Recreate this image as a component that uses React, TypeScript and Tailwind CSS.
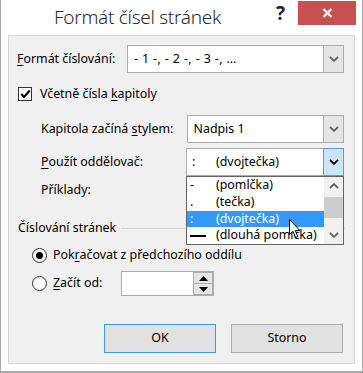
import type { ReactNode } from "react"

function Chevron({ up = false, color = "#555" }: { up?: boolean; color?: string }) {
    return (
        <svg width="10" height="6" viewBox="0 0 10 6">
            <path d={up ? "M1 5 L5 1.2 L9 5" : "M1 1 L5 4.8 L9 1"} fill="none" stroke={color} strokeWidth="1.8" />
        </svg>
    )
}

function Combo({ width, active = false, children }: { width: string; active?: boolean; children: ReactNode }) {
    return (
        <div className={`flex h-[28px] ${width}`}>
            <div className="flex-1 flex items-center bg-white border-y border-l border-[#acacac] text-black">{children}</div>
            {active ? (
                <div className="w-[21px] flex items-center justify-center bg-[#cce4f7] border border-[#569de5]">
                    <Chevron color="#000" />
                </div>
            ) : (
                <div className="w-[21px] flex items-center justify-center bg-[#e5e5e5] border border-[#acacac]">
                    <Chevron color="#606060" />
                </div>
            )}
        </div>
    )
}

function Key({ children }: { children: ReactNode }) {
    return <span className="underline underline-offset-2 decoration-1">{children}</span>
}

const items = [
    { g: "-", t: "(pomlčka)" },
    { g: ".", t: "(tečka)" },
    { g: ":", t: "(dvojtečka)" },
    { g: "—", t: "(dlouhá pomlčka)" },
]

export default function App() {
    return (
        <div className="w-[363px] h-[373px] bg-white border-l border-r border-b-2 border-[#a8a8a8] flex flex-col font-['Noto_Sans',sans-serif] text-[12.4px] text-black leading-none">
            {/* title bar */}
            <div className="h-[35px] flex items-start">
                <div className="pl-[53px] pt-[5px] text-[19px] leading-[24px] text-[#2b2b2b] font-light tracking-[-0.3px]">Formát čísel stránek</div>
                <div className="ml-auto flex items-start">
                    <div className="pr-[13px] text-[19px] leading-[26px] font-bold text-[#222]">?</div>
                    <div className="w-[58px] h-[24px] mt-[1px] mr-[6px] bg-[#c75050] flex items-center justify-center">
                        <svg width="11" height="10" viewBox="0 0 11 10">
                            <path d="M1.5 1 L9.5 9 M9.5 1 L1.5 9" stroke="#fff" strokeWidth="2.2" />
                        </svg>
                    </div>
                </div>
            </div>

            {/* panel */}
            <div className="mx-[7px] h-[329px] bg-[#f0f0f0] border border-[#d5d5d5] flex flex-col">
                <div className="mt-[9px] flex items-center pl-[8px] pr-[10px]">
                    <div className="w-[110px]">
                        <Key>F</Key>ormát číslování:
                    </div>
                    <Combo width="w-[217px]">
                        <span className="pl-[6px] tracking-[0.4px]">- 1 -, - 2 -, - 3 -, …</span>
                    </Combo>
                </div>

                <div className="mt-[13px] h-[16px] flex items-center pl-[9px]">
                    <div className="w-[14px] h-[14px] bg-white border border-[#333] flex items-center justify-center">
                        <svg width="11" height="10" viewBox="0 0 11 10">
                            <path d="M1.2 5 L4 8 L9.8 1.5" fill="none" stroke="#000" strokeWidth="2" />
                        </svg>
                    </div>
                    <span className="ml-[8px]">
                        Včetně čísla <Key>k</Key>apitoly
                    </span>
                </div>

                <div className="mt-[13px] flex items-center pl-[32px] pr-[10px]">
                    <div className="w-[146px]">
                        Kapitola začíná <Key>s</Key>tylem:
                    </div>
                    <Combo width="w-[158px]">
                        <span className="pl-[6px]">Nadpis 1</span>
                    </Combo>
                </div>

                <div className="mt-[5px] flex items-center pl-[32px] pr-[10px]">
                    <div className="w-[146px]">
                        <Key>P</Key>oužít oddělovač:
                    </div>
                    <div className="relative">
                        <Combo width="w-[158px]" active>
                            <span className="w-[29px] pl-[5px]">:</span>
                            <span>(dvojtečka)</span>
                        </Combo>
                        {/* open dropdown list */}
                        <div className="absolute left-0 top-[28px] w-[158px] h-[69px] bg-white border border-[#646464] flex z-10">
                            <div className="flex-1 flex flex-col">
                                {items.map((it, i) => (
                                    <div
                                        key={it.t}
                                        className={
                                            i === 2
                                                ? "h-[17px] flex items-center bg-[#3399ff] text-white outline-1 outline-dotted outline-offset-[-1px] outline-[#c07a2a]"
                                                : "h-[17px] flex items-center"
                                        }
                                    >
                                        <span className="w-[29px] pl-[3px]">{it.g === "—" ? <span className="inline-block w-[16px] h-[1.5px] bg-black align-middle" /> : it.g}</span>
                                        <span className="whitespace-nowrap">{it.t}</span>
                                    </div>
                                ))}
                            </div>
                            <div className="w-[19px] bg-[#f0f0f0] flex flex-col items-center">
                                <div className="h-[18px] flex items-center justify-center">
                                    <Chevron up color="#606060" />
                                </div>
                                <div className="mt-[2px] w-[19px] h-[21px] bg-[#cdcdcd]" />
                                <div className="mt-auto h-[18px] flex items-center justify-center">
                                    <Chevron color="#606060" />
                                </div>
                            </div>
                            {/* mouse pointer */}
                            <svg className="absolute left-[102px] top-[42px]" width="12" height="20" viewBox="0 0 12 20">
                                <path d="M0.5 0.5 L0.5 15.5 L4 12.3 L6.6 18.5 L8.8 17.6 L6.3 11.6 L11 11.6 Z" fill="#fff" stroke="#000" strokeWidth="1" />
                            </svg>
                        </div>
                    </div>
                </div>

                <div className="mt-[6px] h-[16px] flex items-center pl-[32px]">Příklady:</div>

                <div className="mt-[22px] h-[16px] flex items-center pl-[9px] pr-[9px]">
                    <span>Číslování stránek</span>
                    <div className="flex-1 ml-[5px] h-px bg-[#d5d5d5]" />
                </div>

                <div className="mt-[11px] h-[16px] flex items-center pl-[23px]">
                    <div className="w-[15px] h-[15px] rounded-full bg-white border border-[#333] flex items-center justify-center">
                        <div className="w-[7px] h-[7px] rounded-full bg-black" />
                    </div>
                    <span className="ml-[6px]">
                        Pok<Key>r</Key>ačovat z předchozího oddílu
                    </span>
                </div>

                <div className="mt-[8px] h-[25px] flex items-center pl-[23px]">
                    <div className="w-[15px] h-[15px] rounded-full bg-white border border-[#333]" />
                    <span className="ml-[6px] w-[68px]">
                        <Key>Z</Key>ačít od:
                    </span>
                    <div className="w-[93px] h-[25px] bg-white border border-[#acacac] flex">
                        <div className="flex-1" />
                        <div className="w-[20px] flex flex-col">
                            <div className="flex-1 bg-[#e5e5e5] border border-[#acacac] flex items-center justify-center">
                                <svg width="9" height="5" viewBox="0 0 9 5"><path d="M0 5 L4.5 0 L9 5 Z" fill="#000" /></svg>
                            </div>
                            <div className="flex-1 bg-[#e5e5e5] border border-[#acacac] border-t-0 flex items-center justify-center">
                                <svg width="9" height="5" viewBox="0 0 9 5"><path d="M0 0 L4.5 5 L9 0 Z" fill="#000" /></svg>
                            </div>
                        </div>
                    </div>
                </div>

                <div className="mt-[28px] flex justify-end gap-[15px] pr-[11px]">
                    <div className="w-[112px] h-[29px] bg-[#e1e1e1] border border-[#3399ff] flex items-center justify-center">OK</div>
                    <div className="w-[112px] h-[29px] bg-[#e1e1e1] border border-[#adadad] flex items-center justify-center">Storno</div>
                </div>
            </div>
        </div>
    )
}
